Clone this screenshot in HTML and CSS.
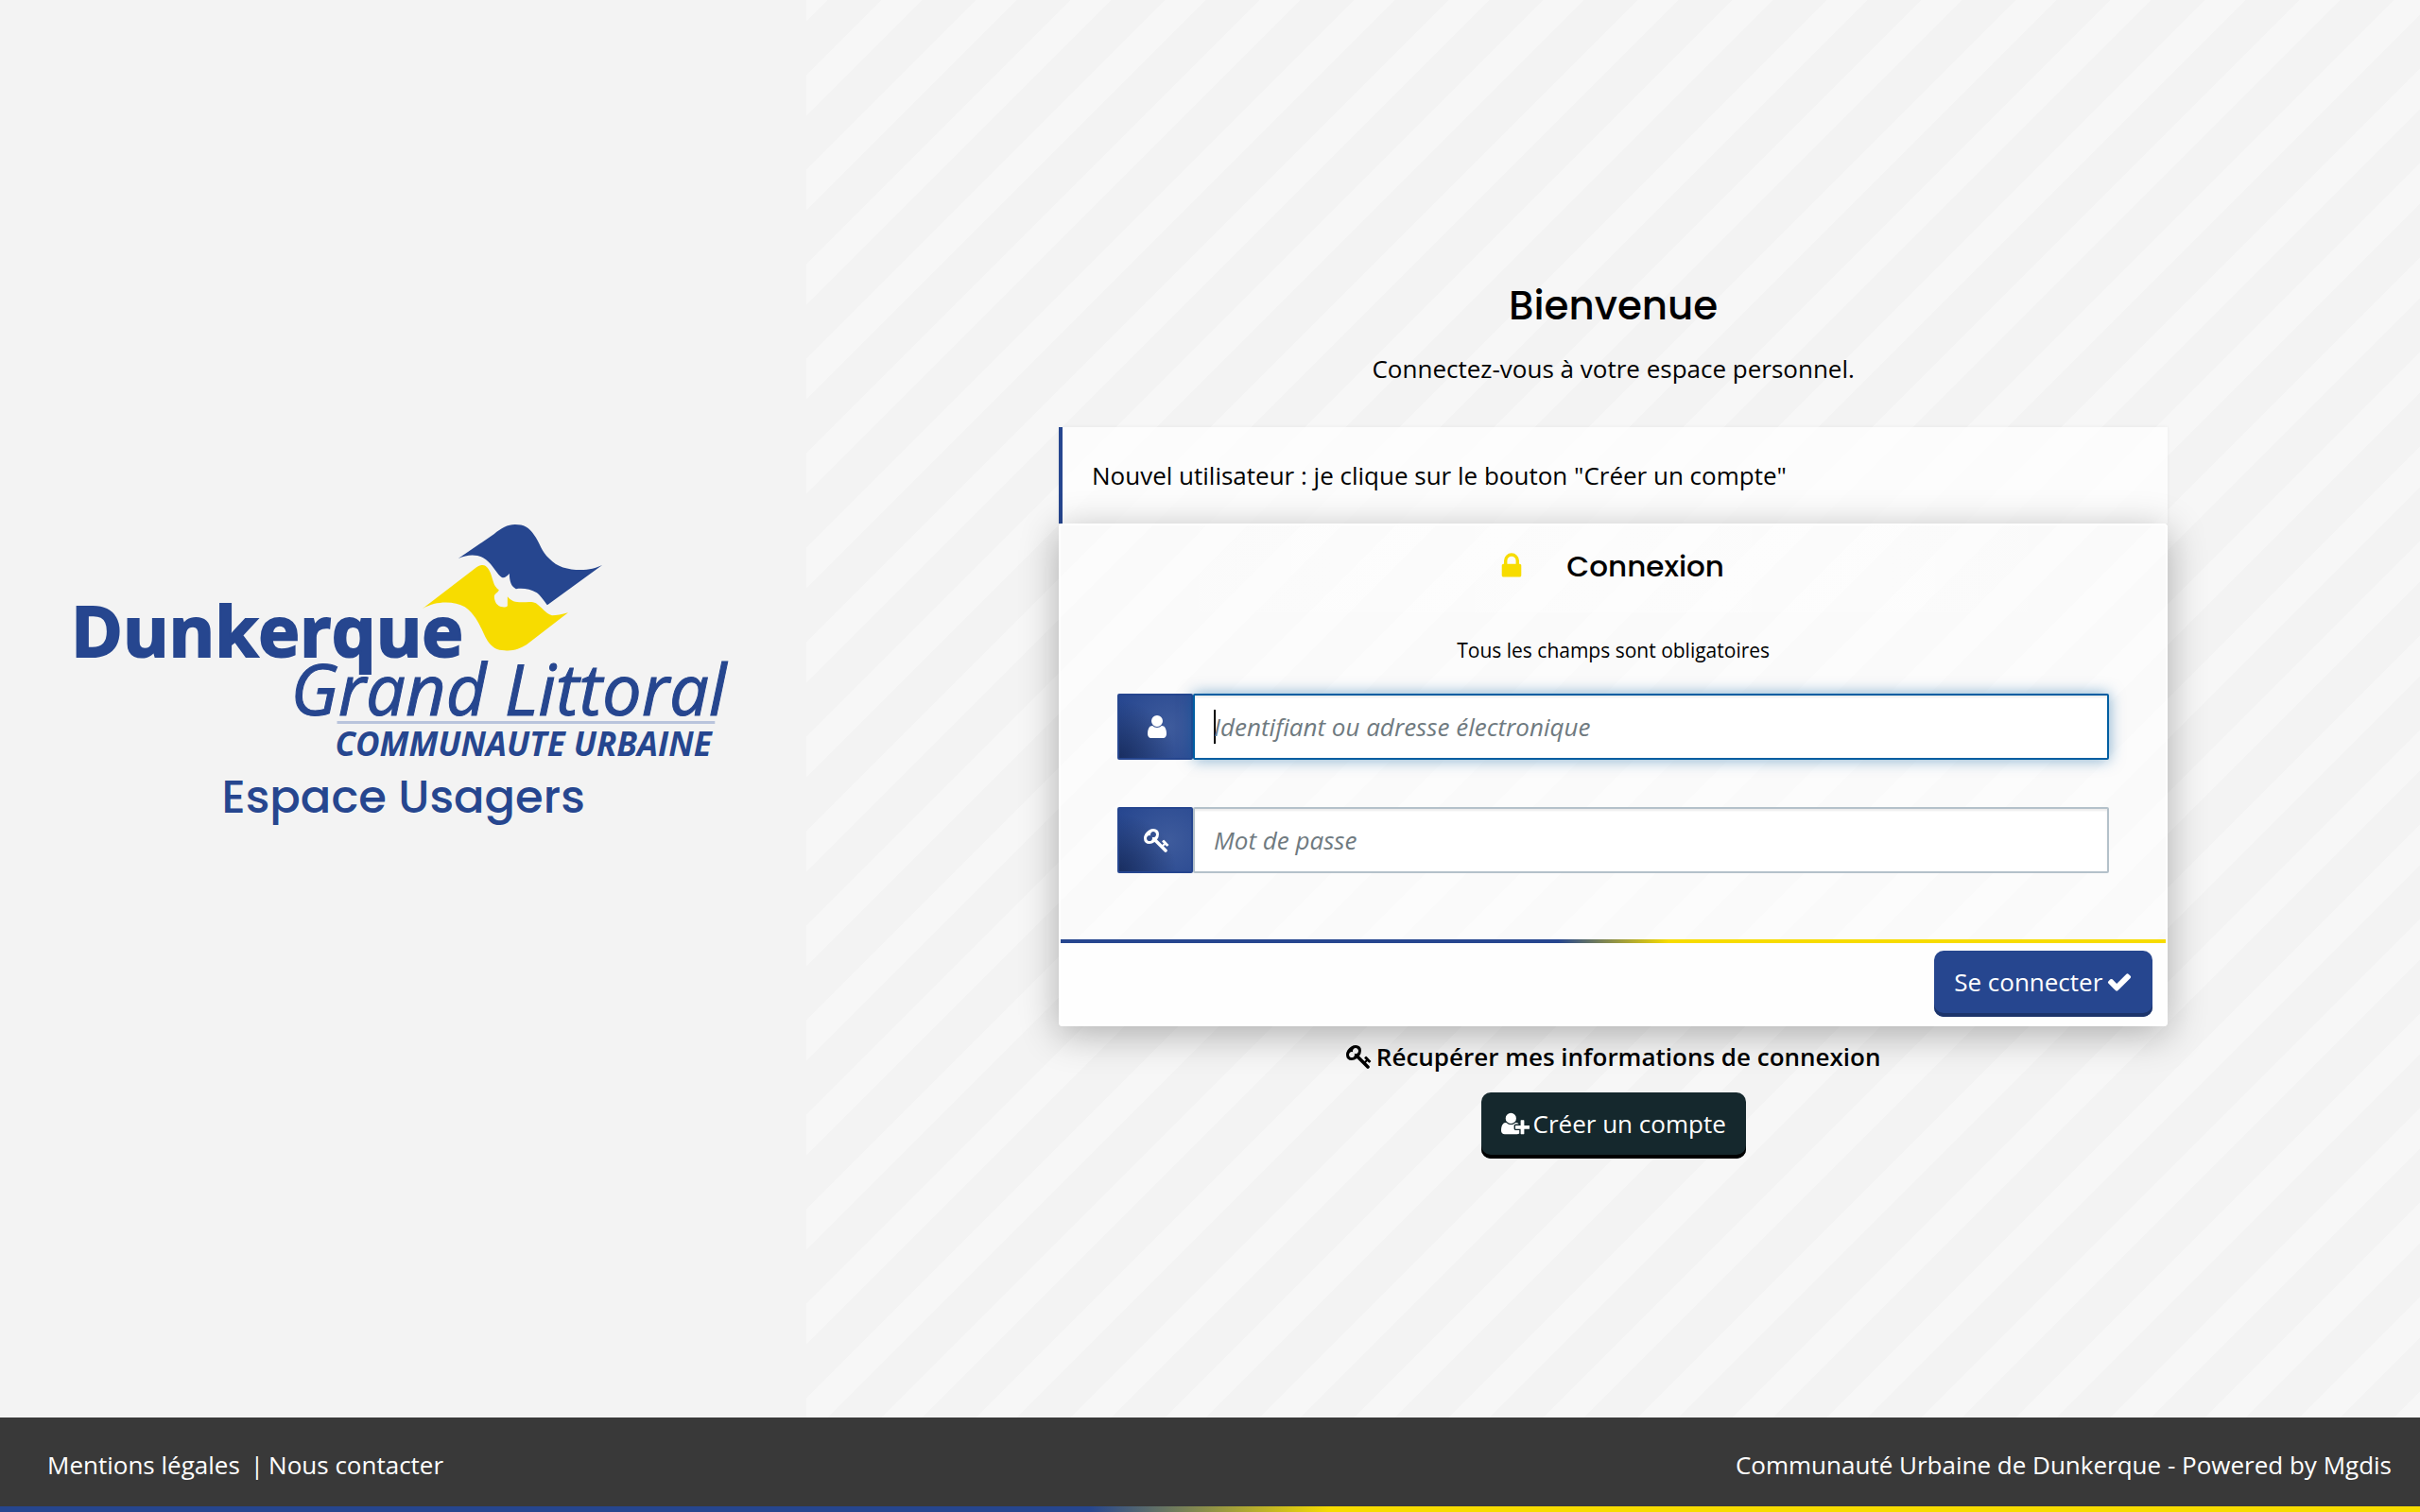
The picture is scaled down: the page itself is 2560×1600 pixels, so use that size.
FILE: index.html
```html
<!DOCTYPE html>
<html lang="fr">
<head>
<meta charset="utf-8">
<title>Connexion - Espace Usagers</title>
<link rel="stylesheet" href="styles.css">
</head>
<body>
<div class="page">
  <div class="columns">
    <header class="brand">
      <svg class="brand-logo" viewBox="0 0 700 260" role="img" aria-label="Dunkerque Grand Littoral, Communauté Urbaine">
        <path class="logo-blue" d="M408 39L446 13C453 7 460 3 468 3C477 3 483 6 488 14C494 22 496 32 504 39C512 48 524 51 537 51C546 51 554 49 560 46L502 88C499 84 495 78 491 75C484 71 476 70 469 71C464 69 462 63 462 55C459 58 457 60 454 59C450 57 444 45 437 40C430 34 418 34 408 39Z"/>
        <path class="logo-yellow" d="M370 92L425 50C430 46 434 45 437 47C443 51 444 64 447 68Q449 71 451 72C450 75 446 76 446 79C446 84 449 90 455 90Q458 91 460 89L460 79C464 84 468 85 475 85C481 85 486 84 490 86C496 90 500 97 507 99Q514 99 524 96L480 130C473 134 466 137 457 136C449 136 444 133 439 126C432 115 430 101 415 90C404 84 385 83 370 92Z"/>
        <text class="logo-name" x="-1" y="143">Dunkerque</text>
        <text class="logo-region" x="231" y="205">Grand Littoral</text>
        <path class="logo-rule" d="M280 212H679"/>
        <text class="logo-status" x="278" y="248">COMMUNAUTE URBAINE</text>
      </svg>
      <p class="brand-title">Espace Usagers</p>
    </header>
    <main class="content">
      <h1 class="welcome">Bienvenue</h1>
      <p class="intro">Connectez-vous à votre espace personnel.</p>
      <p class="notice">Nouvel utilisateur : je clique sur le bouton "Créer un compte"</p>
      <form class="card">
        <h2 class="card-title">
          <svg class="icon icon-lock" viewBox="0 0 1792 1792" aria-hidden="true"><path d="M640 768h512v-192q0-106-75-181t-181-75-181 75-75 181v192zm832 96v576q0 40-28 68t-68 28h-960q-40 0-68-28t-28-68v-576q0-40 28-68t68-28h32v-192q0-184 132-316t316-132 316 132 132 316v192h32q40 0 68 28t28 68z"/></svg>
          Connexion
        </h2>
        <div class="card-body">
          <p class="hint">Tous les champs sont obligatoires</p>
          <div class="field">
            <label class="field-icon" for="login" aria-label="Identifiant"><svg class="icon" viewBox="0 0 1792 1792" aria-hidden="true"><path d="M1536 1399q0 109-62.5 187t-150.5 78h-854q-88 0-150.5-78t-62.5-187q0-85 8.5-160.5t31.5-152 58.5-131 94-89 134.5-34.5q131 128 313 128t313-128q76 0 134.5 34.5t94 89 58.5 131 31.5 152 8.5 160.5zm-256-887q0 159-112.5 271.5t-271.5 112.5-271.5-112.5-112.5-271.5 112.5-271.5 271.5-112.5 271.5 112.5 112.5 271.5z"/></svg></label>
            <input class="field-input" id="login" type="text" placeholder="Identifiant ou adresse électronique" autofocus>
          </div>
          <div class="field">
            <label class="field-icon" for="password" aria-label="Mot de passe"><svg class="icon" viewBox="0 0 1792 1792" aria-hidden="true"><path d="M832 512q0-80-56-136t-136-56-136 56-56 136q0 42 19 83-41-19-83-19-80 0-136 56t-56 136 56 136 136 56 136-56 56-136q0-42-19-83 41 19 83 19 80 0 136-56t56-136zm851 704q0 17-49 66t-66 49q-9 0-28.5-16t-36.5-33-38.5-40-24.5-26l-96 96 220 220q28 28 28 68 0 42-39 81t-81 39q-40 0-68-28l-671-671q-176 131-365 131-163 0-265.5-102.5t-102.5-265.5q0-160 95-313t248-248 313-95q163 0 265.5 102.5t102.5 265.5q0 189-131 365l355 355 96-96q-3-3-26-24.5t-40-38.5-33-36.5-16-28.5q0-17 49-66t66-49q13 0 23 10 6 6 46 44.5t82 79.5 86.5 86 73 78 28.5 41z"/></svg></label>
            <input class="field-input" id="password" type="password" placeholder="Mot de passe">
          </div>
        </div>
        <div class="card-footer">
          <button class="button button-primary" type="submit">Se connecter <svg class="icon" viewBox="0 0 1792 1792" aria-hidden="true"><path d="M1671 566q0 40-28 68l-724 724-136 136q-28 28-68 28t-68-28l-136-136-362-362q-28-28-28-68t28-68l136-136q28-28 68-28t68 28l294 295 656-657q28-28 68-28t68 28l136 136q28 28 28 68z"/></svg></button>
        </div>
      </form>
      <a class="recover" href="#"><svg class="icon" viewBox="0 0 1792 1792" aria-hidden="true"><path d="M832 512q0-80-56-136t-136-56-136 56-56 136q0 42 19 83-41-19-83-19-80 0-136 56t-56 136 56 136 136 56 136-56 56-136q0-42-19-83 41 19 83 19 80 0 136-56t56-136zm851 704q0 17-49 66t-66 49q-9 0-28.5-16t-36.5-33-38.5-40-24.5-26l-96 96 220 220q28 28 28 68 0 42-39 81t-81 39q-40 0-68-28l-671-671q-176 131-365 131-163 0-265.5-102.5t-102.5-265.5q0-160 95-313t248-248 313-95q163 0 265.5 102.5t102.5 265.5q0 189-131 365l355 355 96-96q-3-3-26-24.5t-40-38.5-33-36.5-16-28.5q0-17 49-66t66-49q13 0 23 10 6 6 46 44.5t82 79.5 86.5 86 73 78 28.5 41z"/></svg> Récupérer mes informations de connexion</a>
      <button class="button button-dark" type="button"><svg class="icon icon-wide" viewBox="0 0 2048 1792" aria-hidden="true"><path d="M704 896q-159 0-271.5-112.5t-112.5-271.5 112.5-271.5 271.5-112.5 271.5 112.5 112.5 271.5-112.5 271.5-271.5 112.5zm960 128h352q13 0 22.5 9.5t9.5 22.5v192q0 13-9.5 22.5t-22.5 9.5h-352v352q0 13-9.5 22.5t-22.5 9.5h-192q-13 0-22.5-9.5t-9.5-22.5v-352h-352q-13 0-22.5-9.5t-9.5-22.5v-192q0-13 9.5-22.5t22.5-9.5h352v-352q0-13 9.5-22.5t22.5-9.5h192q13 0 22.5 9.5t9.5 22.5v352zm-736 224q0 52 38 90t90 38h256v238q-68 50-171 50h-874q-121 0-194-69t-73-190q0-53 3.5-103.5t14-109 26.5-108.5 43-97.5 62-81 85.5-53.5 111.5-20q19 0 39 17 79 61 154.5 91.5t164.5 30.5 164.5-30.5 154.5-91.5q20-17 39-17 132 0 217 96h-223q-52 0-90 38t-38 90v192z"/></svg> Créer un compte</button>
    </main>
  </div>
  <footer class="footer">
    <nav class="footer-links"><a href="#">Mentions légales</a><span>|</span><a href="#">Nous contacter</a></nav>
    <p class="footer-credit">Communauté Urbaine de Dunkerque - Powered by Mgdis</p>
  </footer>
</div>
</body>
</html>
```
FILE: styles.css
```css
:root {
  --blue: #26468f;
  --yellow: #f7dc00;
  --duo: linear-gradient(90deg, var(--blue) 45%, var(--yellow) 55%);
}

* { box-sizing: border-box; }

body {
  margin: 0;
  background: #f3f3f3;
  color: #000;
  font: 26px/40px "Open Sans", sans-serif;
}

h1, h2, p { margin: 0; }
a { color: inherit; text-decoration: none; }

.page { display: flex; flex-direction: column; min-height: 100vh; }
.columns { display: grid; grid-template-columns: 1fr 2fr; flex: 1; }

.brand {
  display: flex;
  flex-direction: column;
  justify-content: center;
  align-items: center;
  padding: 0 76px 72px;
}
.brand-logo { width: 100%; overflow: visible; }
.brand-title { color: var(--blue); font: 500 48px/64px Poppins, Inter, sans-serif; }
.logo-blue { fill: var(--blue); }
.logo-yellow { fill: var(--yellow); }
.logo-rule { stroke: #b9c4dc; stroke-width: 3; }
.brand-logo text { fill: var(--blue); font-family: "Open Sans", sans-serif; }
.logo-name { font-size: 74px; font-weight: 700; stroke: var(--blue); stroke-width: 2; }
.logo-region { font-size: 74px; font-style: italic; stroke: var(--blue); stroke-width: 1; }
.logo-status { font-size: 35px; font-style: italic; font-weight: 700; }

.content {
  display: flex;
  flex-direction: column;
  justify-content: center;
  align-items: center;
  padding: 34px 0 16px;
  background: linear-gradient(135deg, #f7f7f7 11.5%, #f3f3f3 11.5% 40%, #f7f7f7 40% 61.5%, #f3f3f3 61.5% 90%, #f7f7f7 90%) 0 0 / 100px 100px;
}
.welcome { margin-bottom: 14px; font: 500 42px/64px Poppins, Inter, sans-serif; }
.intro { margin-bottom: 42px; }
.notice {
  width: 68.75%;
  padding: 31px;
  border-left: 4px solid var(--blue);
  background: rgba(255, 255, 255, .7);
  box-shadow: 0 0 4px rgba(0, 0, 0, .05);
}
.card {
  width: 68.75%;
  border: 2px solid #fff;
  border-radius: 4px;
  background: rgba(255, 255, 255, .6);
  box-shadow: 0 8px 40px rgba(0, 0, 0, .3);
}
.card-title {
  display: flex;
  justify-content: center;
  align-items: center;
  gap: 42px;
  height: 92px;
  padding: 0 6px 6px 0;
  background: linear-gradient(90deg, transparent, rgba(255, 255, 255, .4) 50%, transparent);
  font: 500 31px/48px Poppins, Inter, sans-serif;
}
.card-body { padding: 20px 60px 70px; }
.hint { margin-bottom: 26px; font-size: 21px; text-align: center; }
.field { display: flex; height: 70px; }
.field + .field { margin-top: 50px; }
.field-icon {
  display: flex;
  justify-content: center;
  align-items: center;
  width: 80px;
  padding-left: 4px;
  border: 2px solid var(--blue);
  border-radius: 2px;
  background:
    radial-gradient(circle at 0 100%, rgba(16, 30, 66, .6), transparent 60%),
    radial-gradient(circle at 70% 50%, #3e5b9c, #26468f);
  color: #fff;
}
.field-input {
  flex: 1;
  min-width: 0;
  padding: 0 20px;
  border: 2px solid #b4c1ca;
  border-radius: 2px;
  outline: 0;
  background: #fff;
  box-shadow: inset 0 2px 2px rgba(0, 0, 0, .08);
  font: inherit;
}
.field-input::placeholder { color: #6f7a80; font-style: italic; opacity: 1; }
.field-input:focus {
  border-color: #005ea2;
  box-shadow: inset 0 2px 2px rgba(0, 0, 0, .08), 0 0 16px rgba(0, 94, 162, .5);
}
.field-input:focus:placeholder-shown {
  background: linear-gradient(#000, #000) 20px 50% / 2px 36px no-repeat #fff;
  caret-color: transparent;
}
.card-footer {
  display: flex;
  justify-content: flex-end;
  padding: 12px 14px 8px;
  background: var(--duo) 0 0 / 100% 4px no-repeat, rgba(255, 255, 255, .7);
}

.button {
  display: inline-flex;
  align-items: center;
  gap: 4px;
  height: 70px;
  padding: 0 21px 4px;
  border: 0;
  border-radius: 10px;
  color: #fff;
  font: inherit;
}
.button-primary { background: var(--blue); box-shadow: inset 0 -4px #1c346b; }
.button-dark { background: #15282d; box-shadow: inset 0 -4px #000; }

.recover { display: flex; align-items: center; gap: 4px; margin: 12px 0 18px; font-weight: 600; }

.icon { flex: none; width: 28px; height: 28px; fill: currentColor; }
.icon-wide { width: 30px; }
.icon-lock { width: 32px; height: 32px; fill: var(--yellow); }

.footer {
  display: flex;
  justify-content: space-between;
  padding: 30px 30px 30px 50px;
  background: var(--duo) 0 100% / 100% 6px no-repeat, #393939;
  color: #fff;
}
.footer-links { display: flex; gap: 5px; }
.footer-links span { margin-left: 6px; }
```
